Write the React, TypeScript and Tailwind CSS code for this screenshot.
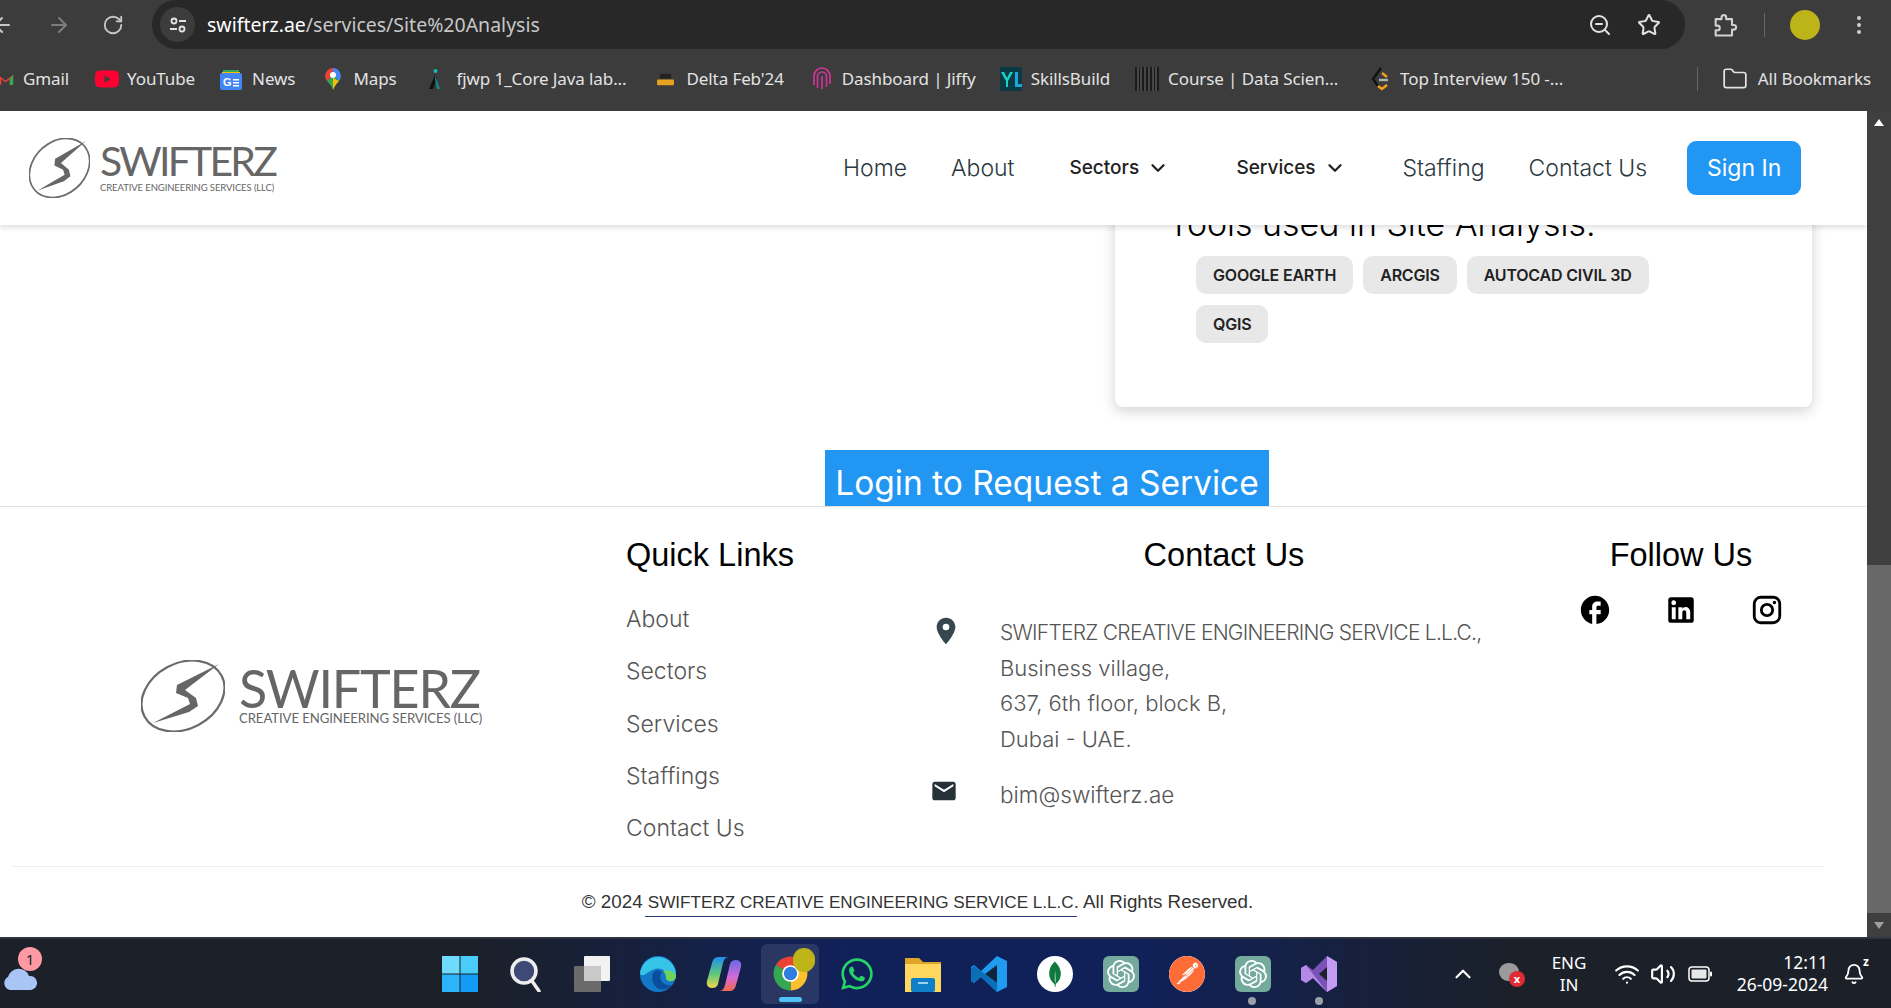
import { ArrowLeft, ArrowRight, RotateCw, ZoomOut, Star, EllipsisVertical, Folder, ChevronUp, Wifi, Volume2, Bell, ChevronDown } from "lucide-react";
import { FaWhatsapp } from "react-icons/fa";
import { MdEmail, MdFacebook, MdLocationOn } from "react-icons/md";
import { SiMongodb, SiOpenai, SiPostman, SiYoutube } from "react-icons/si";

function LogoMark({ className }: { className: string }) {
  return (
    <svg viewBox="0 0 84 72" preserveAspectRatio="none" className={className}>
      <ellipse cx="42" cy="36" rx="43.600" ry="32.800" transform="rotate(-28 42 36)" fill="none" stroke="#6b6b6b" strokeWidth="2.200" />
      <path d="M78 4L36 25L35 33L47 38L49 44L12 63L48 52L57 46L55 38L44 30Z" fill="#666" />
    </svg>
  );
}

function ChromeIcon() {
  return (
    <svg viewBox="0 0 24 24" className="w-[37px] h-[37px]">
      <path d="M12 12L2.500 6.500A11 11 0 0 1 21.500 6.500Z" fill="#ea4335" />
      <path d="M12 12L21.500 6.500A11 11 0 0 1 12 23Z" fill="#fbc02d" />
      <path d="M12 12L12 23A11 11 0 0 1 2.500 6.500Z" fill="#34a853" />
      <circle cx="12" cy="12" r="5.400" fill="#fff" />
      <circle cx="12" cy="12" r="4.300" fill="#2f7de1" />
    </svg>
  );
}

function Favicon({ name }: { name: string }) {
  if (name === "gmail")
    return (
      <svg viewBox="0 0 20 16" className="w-[17px] h-[14px] -ml-[3px]">
        <path d="M1 15V3l9 7 9-7v12h-4V8l-5 4-5-4v7z" fill="#ea4335" />
        <path d="M15 15V8l4-5v12z" fill="#34a853" />
      </svg>
    );
  if (name === "youtube") return <SiYoutube className="w-[24px] h-[24px] text-[#ff0033]" />;
  if (name === "news")
    return (
      <svg viewBox="0 0 24 24" className="w-[24px] h-[24px]">
        <path d="M4 6V3h16v3z" fill="#34a853" />
        <path d="M3 5h18v2H3z" fill="#fbbc04" />
        <rect x="1" y="6" width="22" height="17" rx="2" fill="#4285f4" />
        <text x="4" y="19" fill="#fff" fontSize="11" fontWeight="700" fontFamily="Liberation Sans">G</text>
        <path d="M14 12h6v1.600h-6zM14 15h6v1.600h-6zM14 18h6v1.600h-6z" fill="#fff" />
      </svg>
    );
  if (name === "maps")
    return (
      <svg viewBox="0 0 18 24" className="w-[18px] h-[24px]">
        <path d="M9 1a8 8 0 0 0-6 13l6-6z" fill="#ea4335" />
        <path d="M9 1a8 8 0 0 1 6 13L9 8z" fill="#4285f4" />
        <path d="M3 14l6-6 6 6c-3 3-5 6-6 9-1-3-3-6-6-9z" fill="#34a853" />
        <path d="M9 11l6 3c-3 3-5 6-6 9z" fill="#fbbc04" />
        <circle cx="9" cy="8" r="3" fill="#fff" />
      </svg>
    );
  if (name === "fjwp")
    return (
      <svg viewBox="0 0 16 24" className="w-[16px] h-[24px]">
        <path d="M2 22L8 8l2 3-4 11z" fill="#111" />
        <path d="M8 8l5 14h-3L8 12z" fill="#0e8a8a" />
        <circle cx="8.500" cy="4" r="2" fill="#19b5c0" />
      </svg>
    );
  if (name === "delta")
    return (
      <svg viewBox="0 0 24 16" className="w-[23px] h-[15px]">
        <rect x="6" y="2" width="12" height="5" fill="#222" />
        <rect x="3" y="8" width="18" height="6" rx="1" fill="#e5a321" />
      </svg>
    );
  if (name === "jiffy")
    return (
      <svg viewBox="0 0 20 24" className="w-[20px] h-[24px]" fill="none" stroke="#d6339a" strokeWidth="1.600">
        <path d="M2 18V9a8 8 0 0 1 16 0v8" />
        <path d="M5.500 21V9.500a4.500 4.500 0 0 1 9 0V20" />
        <path d="M10 22V9" />
      </svg>
    );
  if (name === "skills")
    return (
      <svg viewBox="0 0 22 24" className="w-[22px] h-[24px]">
        <rect width="22" height="24" fill="#0a3a44" />
        <path d="M1 5h3l3 6 3-6h3l-5 9v6H6v-6z" fill="#18d2c4" />
        <path d="M15 5h3v12h4v3h-7z" fill="#1aa7e0" />
      </svg>
    );
  if (name === "course")
    return (
      <svg viewBox="0 0 24 24" className="w-[24px] h-[24px]">
        <rect width="24" height="24" fill="#1b1b1b" />
        <path d="M3 0v24M6 0v24M10 0v24M14 0v24M18 0v24M21 0v24" stroke="#666" strokeWidth="1.200" />
      </svg>
    );
  return (
    <svg viewBox="0 0 20 24" className="w-[20px] h-[24px]" fill="none" strokeWidth="2.400">
      <path d="M11 1L3 12l5 7" stroke="#111" />
      <path d="M8 19l4 3 5-4M12 6l5 4" stroke="#f89f1b" />
      <path d="M9 13h9" stroke="#b3b3b3" />
    </svg>
  );
}

const bookmarks = [
  { icon: "gmail", label: "Gmail", cls: "gap-[9px] mr-[26px]" },
  { icon: "youtube", label: "YouTube", cls: "gap-[8px] mr-[24px]" },
  { icon: "news", label: "News", cls: "gap-[9px] mr-[29px]" },
  { icon: "maps", label: "Maps", cls: "gap-[11px] mr-[30px]" },
  { icon: "fjwp", label: "fjwp 1_Core Java lab...", cls: "gap-[14px] mr-[27px]" },
  { icon: "delta", label: "Delta Feb'24", cls: "gap-[10px] mr-[28px]" },
  { icon: "jiffy", label: "Dashboard | Jiffy", cls: "gap-[10px] mr-[24px]" },
  { icon: "skills", label: "SkillsBuild", cls: "gap-[9px] mr-[25px]" },
  { icon: "course", label: "Course | Data Scien...", cls: "gap-[9px] mr-[32px]" },
  { icon: "leet", label: "Top Interview 150 -...", cls: "gap-[10px]" },
];

function BrowserBar() {
  return (
    <div className="h-[111px] shrink-0 bg-[#3c3c3c] text-[#e3e3e3] font-['Noto_Sans',sans-serif] flex flex-col">
      <div className="h-[57px] flex items-start">
        <div className="w-[152px] h-[49px] flex items-center text-[#c7c7c7]">
          <ArrowLeft className="w-[24px] h-[24px] -ml-[10px]" />
          <ArrowRight className="w-[24px] h-[24px] ml-[33px] text-[#7d7d7d]" />
          <RotateCw className="w-[22px] h-[22px] ml-[31px]" />
        </div>
        <div className="w-[1533px] h-[49px] bg-[#282828] rounded-[25px] flex items-center pl-[8px]">
          <div className="w-[35px] h-[35px] rounded-full bg-[#3c3c3c] flex items-center justify-center">
            <svg viewBox="0 0 20 20" className="w-[20px] h-[20px]" fill="none" stroke="#e3e3e3" strokeWidth="1.800">
              <circle cx="6" cy="6" r="2.500" />
              <path d="M11 6h7M2 14h7" />
              <circle cx="14" cy="14" r="2.500" />
            </svg>
          </div>
          <span className="ml-[12px] text-[19.500px] text-[#c7c7c7]">
            <span className="text-white">swifterz.ae</span>/services/Site%20Analysis
          </span>
          <div className="ml-auto mr-[24px] flex items-center gap-[25px] text-[#e3e3e3]">
            <ZoomOut className="w-[24px] h-[24px]" />
            <Star className="w-[24px] h-[24px]" />
          </div>
        </div>
        <div className="h-[49px] flex items-center text-[#d0d0d0]">
          <svg viewBox="0 0 24 24" className="w-[28px] h-[28px] ml-[26px]" fill="none" stroke="currentColor" strokeWidth="1.800" strokeLinejoin="round">
            <path d="M4 7h5V5.500a2 2 0 0 1 4 0V7h5v5h1.500a2 2 0 0 1 0 4H18v5H4v-4.500h1.500a2 2 0 0 0 0-4H4z" />
          </svg>
          <div className="w-px h-[24px] bg-[#666] ml-[25px]" />
          <div className="w-[30px] h-[30px] rounded-full bg-[#bdb41a] ml-[25px]" />
          <EllipsisVertical className="w-[24px] h-[24px] ml-[27px]" />
        </div>
      </div>
      <div className="h-[44px] flex items-center text-[17px] tracking-[-0.100px]">
        {bookmarks.map((b) => (
          <div key={b.label} className={`flex items-center shrink-0 ${b.cls}`}>
            <Favicon name={b.icon} />
            <span className="whitespace-nowrap">{b.label}</span>
          </div>
        ))}
        <div className="ml-auto flex items-center shrink-0 pr-[20px]">
          <div className="w-px h-[24px] bg-[#666] mr-[24px]" />
          <Folder className="w-[26px] h-[26px] mr-[10px]" strokeWidth={1.600} />
          <span>All Bookmarks</span>
        </div>
      </div>
    </div>
  );
}

function NavBar() {
  const link = "text-[23px] font-light text-[#2b3840] whitespace-nowrap";
  const drop = "flex items-center text-[19px] font-medium text-[#222] whitespace-nowrap";
  return (
    <header className="absolute top-0 left-0 right-0 h-[114px] bg-white shadow-[0_2px_6px_rgba(0,0,0,0.15)] z-10 flex items-center pl-[29px]">
      <LogoMark className="w-[61px] h-[60px]" />
      <div className="ml-[10px] w-[176px]">
        <div className="font-[Lato,sans-serif] text-[41px] leading-[36px] text-[#666] tracking-[-2.800px]">SWIFTERZ</div>
        <div className="font-[Lato,sans-serif] text-[9.500px] leading-[12px] mt-[3px] text-[#666] whitespace-nowrap tracking-[-0.100px]">CREATIVE ENGINEERING SERVICES (LLC)</div>
      </div>
      <nav className="ml-[567px] flex items-center">
        <span className={link}>Home</span>
        <span className={`${link} ml-[44px]`}>About</span>
        <span className={`${drop} ml-[55px] w-[167px]`}>
          Sectors <ChevronDown className="w-[22px] h-[22px] ml-[8px]" strokeWidth={2.500} />
        </span>
        <span className={`${drop} w-[166px]`}>
          Services <ChevronDown className="w-[22px] h-[22px] ml-[8px]" strokeWidth={2.500} />
        </span>
        <span className={link}>Staffing</span>
        <span className={`${link} ml-[44px]`}>Contact Us</span>
        <button className="ml-[40px] w-[114px] h-[54px] rounded-[9px] bg-[#2196f3] text-white text-[23px]">Sign In</button>
      </nav>
    </header>
  );
}

function Chip({ label }: { label: string }) {
  return <span className="h-[38px] px-[17px] rounded-[10px] bg-[#e8e8e8] text-[#222] text-[16px] font-semibold flex items-center whitespace-nowrap tracking-[-0.200px]">{label}</span>;
}

function ServiceBody() {
  return (
    <div className="h-[395px] shrink-0 overflow-hidden pt-[92px]">
      <div className="ml-[1115px] w-[697px] h-[204px] bg-white rounded-lg shadow-[0_4px_14px_rgba(0,0,0,0.18)] pl-[53px] pt-px">
        <h3 className="text-[33.900px] leading-[40px] font-light text-black">Tools used in Site Analysis:</h3>
        <div className="mt-[12px] pl-[28px] w-[527px] flex flex-wrap gap-x-[10px] gap-y-[11px]">
          <Chip label="GOOGLE EARTH" />
          <Chip label="ARCGIS" />
          <Chip label="AUTOCAD CIVIL 3D" />
          <Chip label="QGIS" />
        </div>
      </div>
      <button className="block ml-[825px] mt-[43px] w-[444px] h-[56px] pt-[11px] bg-[#2196f3] text-white text-[33.500px] leading-[45px]">Login to Request a Service</button>
    </div>
  );
}

function Footer() {
  const heading = "font-['Liberation_Sans',Arial,sans-serif] text-[32.500px] leading-[38px] text-black";
  const links = ["About", "Sectors", "Services", "Staffings", "Contact Us"];
  return (
    <footer className="flex-1 border-t border-[#e0e0e0] flex flex-col">
      <div className="h-[359px] flex">
        <div className="w-[626px] pl-[141px] flex items-center">
          <div className="flex items-center mt-[18px]">
            <LogoMark className="w-[84px] h-[72px]" />
            <div className="ml-[14px] w-[244px]">
              <div className="font-[Lato,sans-serif] text-[52px] leading-[44px] text-[#666] tracking-[-1.200px]">SWIFTERZ</div>
              <div className="font-[Lato,sans-serif] text-[13.200px] leading-[16px] text-[#666] whitespace-nowrap tracking-[-0.100px]">CREATIVE ENGINEERING SERVICES (LLC)</div>
            </div>
          </div>
        </div>
        <div className="w-[299px] pt-[29px]">
          <h4 className={heading}>Quick Links</h4>
          <ul className="mt-[19px]">
            {links.map((l) => (
              <li key={l} className="h-[52.300px] leading-[52px] text-[23px] font-light text-[#555]">{l}</li>
            ))}
          </ul>
        </div>
        <div className="w-[598px] pt-[29px]">
          <h4 className={`${heading} text-center`}>Contact Us</h4>
          <div className="mt-[41px] flex text-[22px] leading-[35.500px] font-light text-[#555]">
            <div className="w-[75px] pl-[5px]">
              <MdLocationOn className="w-[32px] h-[32px] text-[#37474f]" />
            </div>
            <p className="whitespace-nowrap">
              <span className="text-[21px] tracking-[-0.750px]">SWIFTERZ CREATIVE ENGINEERING SERVICE L.L.C.,</span>
              <br />
              Business village,
              <br />
              637, 6th floor, block B,
              <br />
              Dubai - UAE.
            </p>
          </div>
          <div className="mt-[20px] flex text-[22.500px] leading-[35.500px] font-light text-[#555]">
            <div className="w-[75px] pl-[5px]">
              <MdEmail className="w-[28px] h-[28px] text-[#263238]" />
            </div>
            <span>bim@swifterz.ae</span>
          </div>
        </div>
        <div className="w-[316px] pt-[29px]">
          <h4 className={`${heading} text-center`}>Follow Us</h4>
          <div className="mt-[19px] flex justify-center gap-[54px]">
            <MdFacebook className="w-[34px] h-[34px] -mx-px text-black" />
            <svg viewBox="0 0 24 24" className="w-[34px] h-[34px] -mx-px">
              <path d="M19 3a2 2 0 0 1 2 2v14a2 2 0 0 1-2 2H5a2 2 0 0 1-2-2V5a2 2 0 0 1 2-2h14m-.5 15.500v-5.300a3.260 3.260 0 0 0-3.260-3.260c-.85 0-1.840.52-2.320 1.300v-1.110h-2.790v8.370h2.790v-4.930c0-.77.62-1.400 1.390-1.400a1.400 1.400 0 0 1 1.400 1.400v4.930h2.790M6.880 8.560a1.680 1.680 0 0 0 1.680-1.680c0-.93-.75-1.690-1.680-1.690a1.690 1.690 0 0 0-1.690 1.690c0 .93.76 1.680 1.690 1.680m1.390 9.940v-8.370H5.500v8.370h2.770z" />
            </svg>
            <svg viewBox="0 0 24 24" className="w-[34px] h-[34px] -mx-px">
              <path d="M7.800 2h8.400C19.400 2 22 4.600 22 7.800v8.400a5.800 5.800 0 0 1-5.800 5.800H7.800C4.600 22 2 19.400 2 16.200V7.800A5.800 5.800 0 0 1 7.800 2m-.2 2A3.600 3.600 0 0 0 4 7.600v8.800C4 18.390 5.610 20 7.600 20h8.800a3.600 3.600 0 0 0 3.600-3.600V7.600C20 5.610 18.390 4 16.400 4H7.600m9.650 1.500a1.250 1.250 0 0 1 1.250 1.250A1.250 1.250 0 0 1 17.250 8 1.250 1.250 0 0 1 16 6.750a1.250 1.250 0 0 1 1.250-1.250M12 7a5 5 0 0 1 5 5 5 5 0 0 1-5 5 5 5 0 0 1-5-5 5 5 0 0 1 5-5m0 2a3 3 0 0 0-3 3 3 3 0 0 0 3 3 3 3 0 0 0 3-3 3 3 0 0 0-3-3z" />
            </svg>
          </div>
        </div>
      </div>
      <div className="ml-[12px] w-[1811px] flex-1 border-t border-[#eeeeee] flex items-center justify-center font-['Liberation_Sans',Arial,sans-serif] text-[18.800px] text-[#333]">
        <p>
          © 2024 <a className="text-[17.100px] border-b border-[#2a3f7a] pb-[4px] px-[3px] -mx-[3px]">SWIFTERZ CREATIVE ENGINEERING SERVICE L.L.C</a>. All Rights Reserved.
        </p>
      </div>
    </footer>
  );
}

function Scrollbar() {
  return (
    <div className="w-[24px] shrink-0 bg-[#3f3f3f] flex flex-col items-center">
      <div className="mt-[8px] w-0 h-0 border-x-[5px] border-x-transparent border-b-[7px] border-b-white" />
      <div className="mt-[439px] w-full h-[348px] bg-[#686868]" />
      <div className="mt-[9px] w-0 h-0 border-x-[5px] border-x-transparent border-t-[7px] border-t-[#a0a0a0]" />
    </div>
  );
}

function Taskbar() {
  return (
    <div className="h-[71px] shrink-0 border-t-2 border-[#2f3440] bg-[linear-gradient(90deg,#1b2029_0%,#1b2029_25%,#10215a_45%,#10215a_60%,#1b2029_80%,#1b2029_100%)] flex items-center text-white font-['Noto_Sans',sans-serif]">
      <div className="w-[442px] shrink-0 pl-[2px] relative h-full flex items-center">
        <svg viewBox="0 0 36 26" className="w-[36px] h-[26px] mt-[6px]">
          <path d="M8 26a7 7 0 0 1-2-13 11 11 0 0 1 21-1 7 7 0 0 1 2 14z" fill="#a9c5f5" />
        </svg>
        <span className="absolute left-[18px] top-[8px] w-[24px] h-[24px] rounded-full bg-[#ff9aa5] text-[#222] text-[15px] flex items-center justify-center">1</span>
      </div>
      <div className="flex items-center gap-[30px] shrink-0">
        <svg viewBox="0 0 36 36" className="w-[36px] h-[36px]">
          <rect x="0" y="0" width="17.500" height="17.500" fill="#6fdcff" />
          <rect x="18.500" y="0" width="17.500" height="17.500" fill="#4bcdfb" />
          <rect x="0" y="18.500" width="17.500" height="17.500" fill="#2cb4fb" />
          <rect x="18.500" y="18.500" width="17.500" height="17.500" fill="#149cf5" />
        </svg>
        <svg viewBox="0 0 36 36" className="w-[36px] h-[36px]">
          <circle cx="16" cy="15" r="12" fill="#3e4a75" stroke="#eee" strokeWidth="3.500" />
          <path d="M24 25l7 10" stroke="#eee" strokeWidth="3.500" strokeLinecap="round" />
        </svg>
        <svg viewBox="0 0 36 36" className="w-[36px] h-[36px]">
          <rect x="10" y="0" width="26" height="25" rx="1" fill="#f2f2f2" />
          <rect x="0" y="10" width="27" height="26" rx="1" fill="#6a6a6a" />
          <rect x="10" y="10" width="17" height="15" fill="#c9c9c9" />
        </svg>
        <svg viewBox="0 0 36 36" className="w-[36px] h-[36px]">
          <circle cx="18" cy="18" r="18" fill="#1478c8" />
          <path d="M0 18a18 18 0 0 1 36 2c0 6-9 7-10 2 2-6-4-11-11-9-8 2-11 9-15 5z" fill="#36c5e8" />
          <path d="M36 20c0 6-9 7-10 2 0-3-1-5-3-7 7-1 12 0 13 5z" fill="#6fd35a" />
          <path d="M17 14c-6 2-7 12 0 18 6 3 12 1 15-3-8 2-15-6-10-13z" fill="#0b4f9c" />
        </svg>
        <svg viewBox="0 0 36 36" className="w-[36px] h-[36px]">
          <defs>
            <linearGradient id="copL" x1="0" y1="0" x2="0" y2="1">
              <stop offset="0" stopColor="#1e90f0" />
              <stop offset="0.55" stopColor="#5fc77a" />
              <stop offset="1" stopColor="#f2d84a" />
            </linearGradient>
            <linearGradient id="copR" x1="0" y1="0" x2="0" y2="1">
              <stop offset="0" stopColor="#6a6ae8" />
              <stop offset="0.55" stopColor="#d46ad8" />
              <stop offset="1" stopColor="#f2684c" />
            </linearGradient>
          </defs>
          <path d="M13 1h10c-4 0-5 3-6 6l-5 21c-1 3-3 4-6 4-4 0-6-3-5-7l5-18c1-4 3-6 7-6z" fill="url(#copL)" />
          <path d="M23 35H13c4 0 5-3 6-6l5-21c1-3 3-4 6-4 4 0 6 3 5 7l-5 18c-1 4-3 6-7 6z" fill="url(#copR)" />
        </svg>
        <div className="relative w-[37px] h-[37px]">
          <div className="absolute -left-[11px] -right-[10px] -top-[11px] -bottom-[12px] rounded-[6px] bg-white/10" />
          <div className="relative"><ChromeIcon /></div>
          <div className="absolute left-[21px] -top-[7px] w-[22px] h-[24px] rounded-full bg-[#bdb41a]" />
          <div className="absolute left-[7px] top-[42px] w-[23px] h-[5px] rounded-full bg-[#4fc3f7]" />
        </div>
        <FaWhatsapp className="w-[36px] h-[36px] text-[#25d366]" />
        <svg viewBox="0 0 36 36" className="w-[36px] h-[36px]">
          <path d="M0 2h14l4 4h18v30H0z" fill="#e0a526" />
          <rect x="0" y="8" width="36" height="28" fill="#ffd75e" />
          <rect x="6" y="22" width="24" height="14" rx="2" fill="#0f7fc9" />
          <rect x="13" y="26" width="10" height="2" fill="#9ad4f5" />
        </svg>
        <svg viewBox="0 0 36 36" className="w-[36px] h-[36px]">
          <path d="M26 0l10 5v26l-10 5-16-15-7 6-3-2v-14l3-2 7 6z" fill="#1f9cf0" />
          <path d="M26 9v18l-12-9z" fill="#10233f" />
          <path d="M0 12l3-2 23 17v9l-16-15-7 6-3-2z" fill="#0b6fb8" />
        </svg>
        <div className="w-[36px] h-[36px] rounded-full bg-white flex items-center justify-center">
          <SiMongodb className="w-[26px] h-[26px] text-[#0f7a3d]" />
        </div>
        <div className="w-[36px] h-[36px] rounded-[6px] bg-[#74aa9c] flex items-center justify-center">
          <SiOpenai className="w-[28px] h-[28px] text-white" />
        </div>
        <SiPostman className="w-[36px] h-[36px] text-[#ff6c37] bg-white rounded-full" />
        <div className="relative w-[36px] h-[36px] rounded-[6px] bg-[#74aa9c] flex items-center justify-center">
          <SiOpenai className="w-[28px] h-[28px] text-white" />
          <div className="absolute left-[13px] top-[41px] w-[8px] h-[8px] rounded-full bg-[#9aa0a8]" />
        </div>
        <div className="relative w-[36px] h-[36px]">
          <svg viewBox="0 0 36 36" className="w-[36px] h-[36px]">
            <path d="M26 0l10 6v24l-10 6-14-14-7 5-5-3v-12l5-3 7 5z" fill="#7b52b8" />
            <path d="M26 0l10 6v24l-10 6z" fill="#c39bf0" />
            <path d="M0 12l5-3 21 27-14-14-7 5-5-3z" fill="#b48ae6" />
            <path d="M26 11v14l-8-7z" fill="#1b2029" />
          </svg>
          <div className="absolute left-[14px] top-[41px] w-[8px] h-[8px] rounded-full bg-[#9aa0a8]" />
        </div>
      </div>
      <ChevronUp className="w-[26px] h-[26px] ml-[113px] shrink-0" />
      <div className="relative w-[26px] h-[26px] ml-[23px] shrink-0">
        <div className="absolute left-0 top-[2px] w-[20px] h-[18px] rounded-full bg-[#9b9b9b]" />
        <div className="absolute left-[10px] top-[10px] w-[16px] h-[16px] rounded-full bg-[#e02b35] text-[11px] leading-[16px] font-bold text-center">x</div>
      </div>
      <div className="w-[72px] ml-[8px] text-center text-[17px] leading-[22px] shrink-0">
        <div>ENG</div>
        <div>IN</div>
      </div>
      <Wifi className="w-[26px] h-[26px] ml-[9px] shrink-0" />
      <Volume2 className="w-[26px] h-[26px] ml-[10px] shrink-0" />
      <svg viewBox="0 0 24 16" className="w-[24px] h-[16px] ml-[12px] shrink-0">
        <rect x="1" y="1" width="20" height="14" rx="3" fill="none" stroke="#fff" strokeWidth="1.500" />
        <rect x="3.500" y="3.500" width="15" height="9" rx="1" fill="#e8e8e8" />
        <rect x="22" y="5.500" width="2" height="5" rx="1" fill="#fff" />
      </svg>
      <div className="w-[116px] -mt-[2px] text-right text-[17.500px] leading-[22px] shrink-0">
        <div>12:11</div>
        <div>26-09-2024</div>
      </div>
      <div className="relative ml-[15px] shrink-0">
        <Bell className="w-[22px] h-[24px]" />
        <span className="absolute -right-[4px] -top-[6px] text-[12px] leading-[12px] font-bold">z</span>
      </div>
    </div>
  );
}

export default function App() {
  return (
    <div className="w-[1891px] h-[1008px] overflow-hidden flex flex-col bg-white font-[Inter,sans-serif]">
      <BrowserBar />
      <div className="flex-1 min-h-0 flex">
        <div className="relative flex-1 min-w-0 flex flex-col overflow-hidden">
          <NavBar />
          <ServiceBody />
          <Footer />
        </div>
        <Scrollbar />
      </div>
      <Taskbar />
    </div>
  );
}
